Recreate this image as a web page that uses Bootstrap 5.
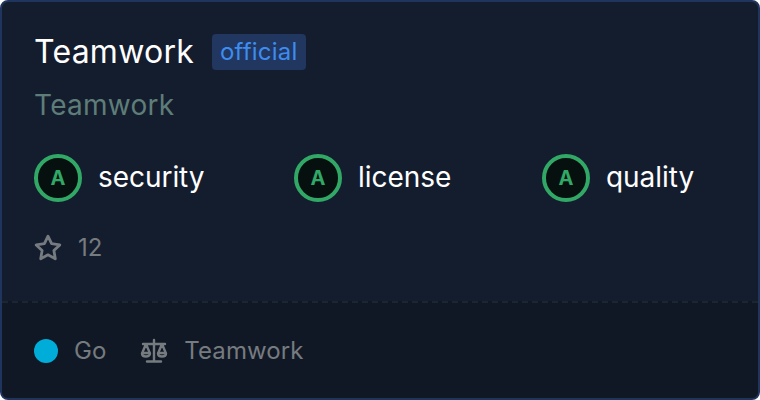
<!DOCTYPE html>
<html lang="en">
<head>
    <meta charset="UTF-8">
    <title>Teamwork</title>
    <link href="https://cdn.jsdelivr.net/npm/bootstrap@5.3.0/dist/css/bootstrap.min.css" rel="stylesheet">
    <style>
        html, body { background: #fff; margin: 0; }
        body { font-family: Inter, "Noto Sans", sans-serif; }
        .repo-card { width: 760px; height: 400px; background: #141d2e; border: 2px solid #20355e; border-radius: 8px; overflow: hidden; }
        .repo-top { height: 299px; padding: 30px 32px 0; }
        .repo-name { font-size: 32px; line-height: 40px; color: #fff; letter-spacing: .25px; }
        .tag-official { margin-left: 18px; height: 36px; padding: 0 9px 0 8px; font-size: 24px; line-height: 36px; color: #3e8cf0; background: #21375f; border-radius: 4px; letter-spacing: .2px; }
        .repo-sub { font-size: 28px; line-height: 36px; margin-top: 15px; color: #5f7d78; letter-spacing: .25px; }
        .score-row { margin-top: 31px; height: 48px; }
        .score-a { width: 260px; }
        .score-b { width: 248px; }
        .grade { width: 48px; height: 48px; border: 4px solid #31a866; border-radius: 50%; background: #06100f; color: #31a866; font-size: 20px; font-weight: 700; flex: none; padding-bottom: 1px; }
        .score-text { margin-left: 16px; margin-bottom: 2px; font-size: 28px; line-height: 40px; color: #fff; letter-spacing: -.05px; }
        .stars { margin-top: 30px; height: 32px; color: #767b80; font-size: 24px; }
        .stars svg { margin-right: 16px; }
        .repo-foot { height: 97px; padding: 0 32px; background: #111825; border-top: 2px dashed #1c2633; color: #767b80; font-size: 24px; }
        .lang-dot { width: 24px; height: 24px; border-radius: 50%; background: #00add8; margin-right: 16px; }
        .scale-ico { margin-left: 34px; margin-right: 16px; }
        .foot-name { letter-spacing: .1px; }
    </style>
</head>
<body>
    <div class="repo-card d-flex flex-column">
        <div class="repo-top">
            <div class="d-flex align-items-center">
                <span class="repo-name">Teamwork</span>
                <span class="tag-official">official</span>
            </div>
            <div class="repo-sub">Teamwork</div>
            <div class="score-row d-flex align-items-center">
                <div class="score-a d-flex align-items-center"><span class="grade d-flex align-items-center justify-content-center">A</span><span class="score-text">security</span></div>
                <div class="score-b d-flex align-items-center"><span class="grade d-flex align-items-center justify-content-center">A</span><span class="score-text">license</span></div>
                <div class="d-flex align-items-center"><span class="grade d-flex align-items-center justify-content-center">A</span><span class="score-text">quality</span></div>
            </div>
            <div class="stars d-flex align-items-center">
                <svg width="28" height="28" viewBox="0 0 28 28" fill="none" stroke="#767b80" stroke-width="2.800" stroke-linejoin="round"><path d="M14 2.200l3.600 7.500 8.200 1.200-5.900 5.700 1.400 8.200L14 20.800 6.700 24.800l1.400-8.200-5.900-5.700 8.200-1.200z"/></svg>
                <span>12</span>
            </div>
        </div>
        <div class="repo-foot d-flex align-items-center">
            <span class="lang-dot"></span>
            <span>Go</span>
            <svg class="scale-ico" width="28" height="26" viewBox="0 0 28 26" fill="none" stroke="#767b80" stroke-width="2.400" stroke-linejoin="round" stroke-linecap="round"><path d="M14 2v21M7 23.500h14M3 6h22M6 6l-4 9.500c0 2 1.800 3 4 3s4-1 4-3zM22 6l-4 9.500c0 2 1.800 3 4 3s4-1 4-3z"/><path d="M2.500 15h7M18.500 15h7"/></svg>
            <span class="foot-name">Teamwork</span>
        </div>
    </div>
    <script src="https://cdn.jsdelivr.net/npm/bootstrap@5.3.0/dist/js/bootstrap.bundle.min.js"></script>
</body>
</html>
